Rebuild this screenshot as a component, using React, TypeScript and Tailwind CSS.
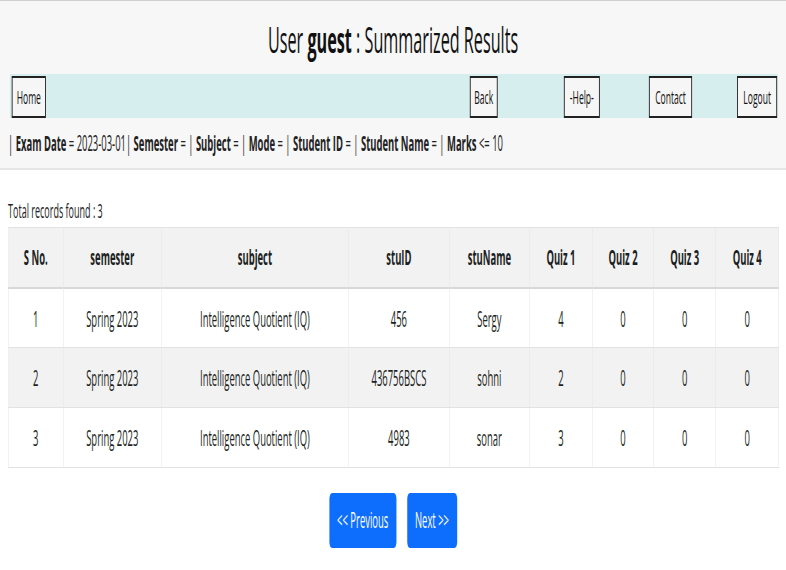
const rows = [
  { sno: 1, semester: "Spring 2023", subject: "Intelligence Quotient (IQ)", stuID: "456", stuName: "Sergy", q1: 4, q2: 0, q3: 0, q4: 0 },
  { sno: 2, semester: "Spring 2023", subject: "Intelligence Quotient (IQ)", stuID: "436756BSCS", stuName: "sohni", q1: 2, q2: 0, q3: 0, q4: 0 },
  { sno: 3, semester: "Spring 2023", subject: "Intelligence Quotient (IQ)", stuID: "4983", stuName: "sonar", q1: 3, q2: 0, q3: 0, q4: 0 },
];

const cols = [
  { label: "S No.", w: "w-[122px]" },
  { label: "semester", w: "w-[218px]" },
  { label: "subject", w: "w-[416px]" },
  { label: "stuID", w: "w-[224px]" },
  { label: "stuName", w: "w-[178px]" },
  { label: "Quiz 1", w: "w-[140px]" },
  { label: "Quiz 2", w: "w-[136px]" },
  { label: "Quiz 3", w: "w-[138px]" },
  { label: "Quiz 4", w: "w-[140px]" },
];

function NavButton({ children, className = "" }: { children: React.ReactNode; className?: string }) {
  return (
    <button className={`h-[42px] px-0 border-2 border-[#222] bg-[#f6f6f6] text-[19px] text-[#111] ${className}`}>
      {children}
    </button>
  );
}

const filters: [string, string][] = [
  ["Exam Date", "2023-03-01"],
  ["Semester", ""],
  ["Subject", ""],
  ["Mode", ""],
  ["Student ID", ""],
  ["Student Name", ""],
];

export default function App() {
  return (
    <div className="w-[786px] min-h-[570px] overflow-hidden bg-white">
      {/* page is laid out wide, then squeezed horizontally like the capture */}
      <div className="w-[1747px] origin-top-left scale-x-[0.45] font-['Open_Sans',sans-serif] text-[#1c1f23]">
        <div className="bg-[#f7f7f7] border-t border-[#cfcfcf] border-b-2 border-b-[#e6e6e6] h-[170px]">
          <h1 className="pt-[17px] text-center text-[36px] leading-[44px] text-[#111]">
            User <b>guest</b> : Summarized Results
          </h1>
          <div className="mt-[12px] ml-[22px] mr-[18px] h-[44px] pt-[2px] bg-[#d7eeef] flex items-start">
            <NavButton className="ml-[4px] w-[76px]">Home</NavButton>
            <NavButton className="ml-auto w-[62px]">Back</NavButton>
            <NavButton className="ml-[147px] w-[80px]">-Help-</NavButton>
            <NavButton className="ml-[109px] w-[96px]">Contact</NavButton>
            <NavButton className="ml-[100px] mr-[2px] w-[89px]">Logout</NavButton>
          </div>
          <p className="mt-[12px] px-[18px] text-[21px] leading-[26px] text-[#222]">
            {filters.map(([k, v]) => (
              <span key={k}>
                | <b>{k}</b> = {v}
              </span>
            ))}
            | <b>Marks</b> &lt;= 10
          </p>
        </div>

        <div className="px-[18px]">
          <p className="mt-[30px] text-[20px] leading-[22px] text-[#222]">Total records found : 3</p>
          <table className="mt-[5px] w-[1712px] border-collapse table-fixed text-[21px]">
            <thead>
              <tr className="bg-[#f2f2f2] h-[60px]">
                {cols.map((c) => (
                  <th key={c.label} className={`${c.w} border border-[#e2e2e2] border-b-2 border-b-[#d8d8d8] font-bold text-center`}>
                    {c.label}
                  </th>
                ))}
              </tr>
            </thead>
            <tbody>
              {rows.map((r, i) => (
                <tr key={r.sno} className={`h-[60px] ${i % 2 === 1 ? "bg-[#f2f2f2]" : "bg-white"}`}>
                  {[r.sno, r.semester, r.subject, r.stuID, r.stuName, r.q1, r.q2, r.q3, r.q4].map((v, j) => (
                    <td key={j} className="border border-[#e2e2e2] text-center pt-[3px]">
                      {v}
                    </td>
                  ))}
                </tr>
              ))}
            </tbody>
          </table>
        </div>

        <div className="mt-[25px] flex justify-center gap-[24px]">
          <button className="h-[55px] w-[149px] rounded-md bg-[#0d6efd] text-white text-[21px]">&lt;&lt; Previous</button>
          <button className="h-[55px] w-[111px] rounded-md bg-[#0d6efd] text-white text-[21px]">Next &gt;&gt;</button>
        </div>
      </div>
    </div>
  );
}
